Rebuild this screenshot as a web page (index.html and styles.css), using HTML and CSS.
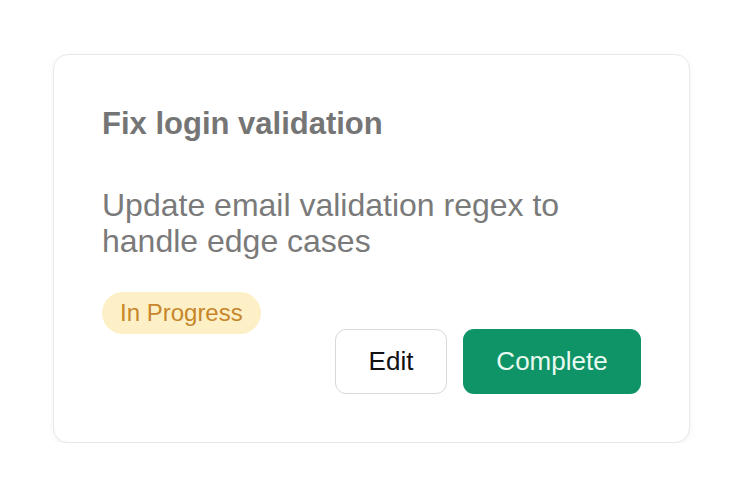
FILE: index.html
```html
<!DOCTYPE html>
<html lang="en">
<head>
  <meta charset="UTF-8">
  <title>Task Card</title>
  <link rel="stylesheet" href="styles.css">
</head>
<body>

  <div class="card">
    <h2 class="title">Fix login validation</h2>
    <p class="desc">Update email validation regex to handle edge cases</p>

    <div class="footer">
      <span class="badge">In Progress</span>
      <div class="actions">
        <button class="btn btn-edit">Edit</button>
        <button class="btn btn-complete">Complete</button>
      </div>
    </div>
  </div>

</body>
</html>
```

FILE: styles.css
```css
* { box-sizing: border-box; }
body { margin: 0; padding: 54px 0 0 53px; background: #fff; font-family: "Liberation Sans", Arial, sans-serif; }
.card { width: 637px; padding: 51px 48px 48px 48px; border: 1px solid #e8e8e8; border-radius: 15px; box-shadow: 0 2px 6px rgba(0,0,0,0.05); background: #fff; }
.title { margin: 0; font-size: 31px; line-height: 36px; font-weight: bold; color: #757575; }
.desc { margin: 45px 0 0; max-width: 470px; font-size: 32px; line-height: 36px; color: #7a7a7a; }
.footer { display: flex; justify-content: space-between; align-items: flex-start; margin-top: 33px; }
.badge { height: 42px; padding: 0 18px; border-radius: 21px; background: #fdf0c6; color: #c7862b; font-size: 24px; line-height: 42px; }
.actions { display: flex; gap: 16px; margin-top: 37px; }
.btn { height: 65px; padding: 0; border-radius: 11px; font-family: inherit; font-size: 26px; cursor: pointer; }
.btn-edit { width: 112px; background: #fff; border: 1px solid #d9d9d9; color: #111; }
.btn-complete { width: 178px; background: #0e9466; border: none; color: #e9faf1; }
```
